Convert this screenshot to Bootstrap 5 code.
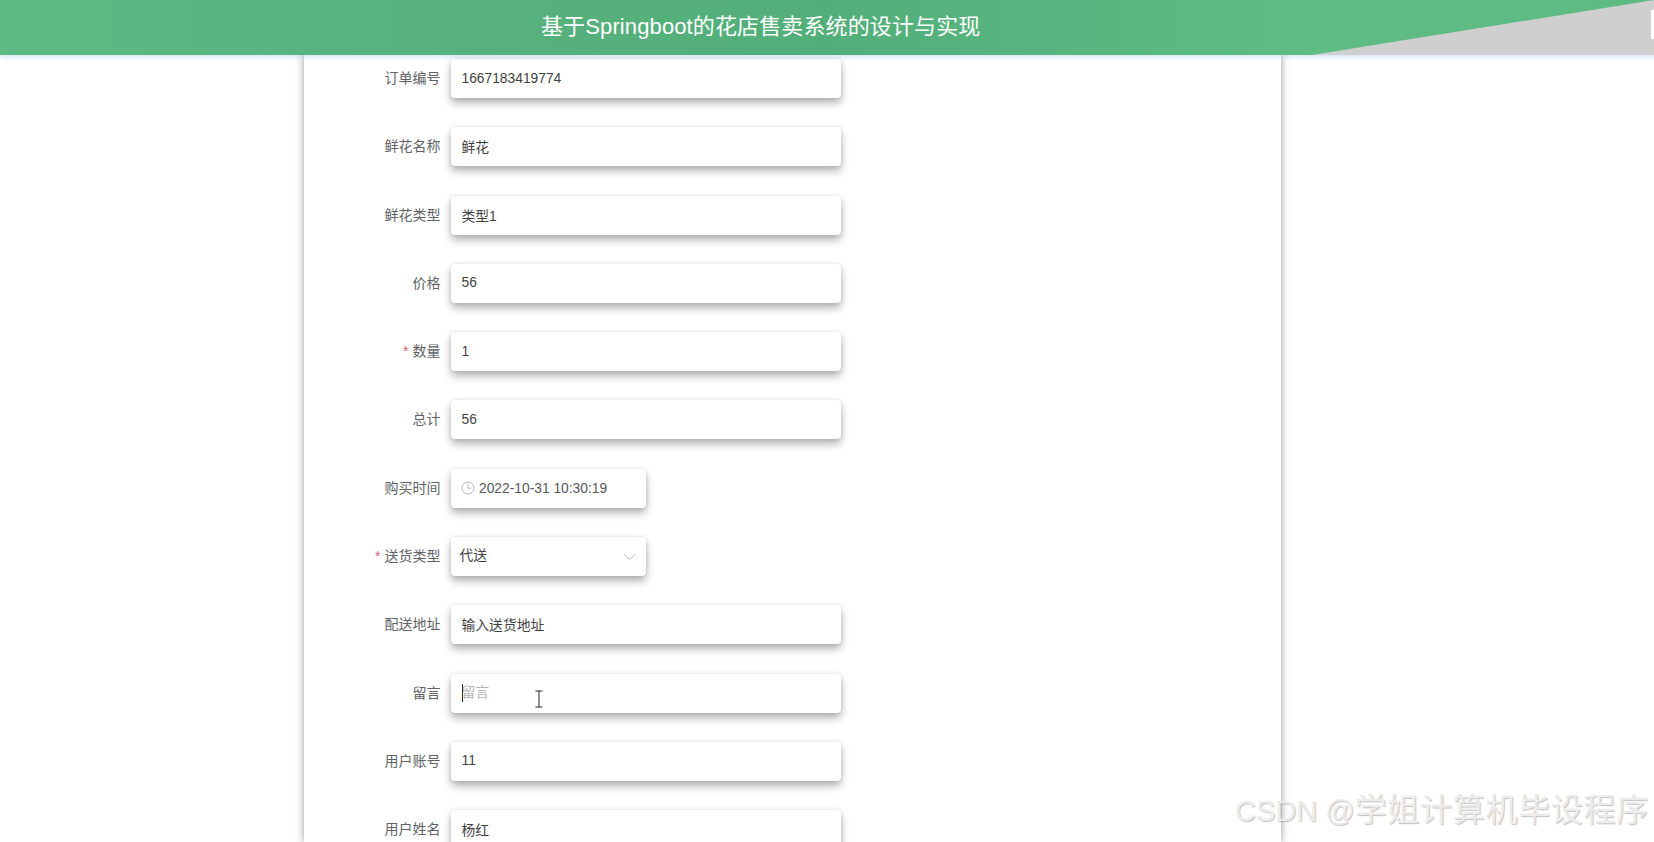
<!DOCTYPE html>
<html lang="zh">
<head>
<meta charset="utf-8">
<title>订单</title>
<link href="https://cdn.jsdelivr.net/npm/bootstrap@5.3.0/dist/css/bootstrap.min.css" rel="stylesheet">
<style>
html,body{height:842px;overflow:hidden;background:#fff;font-family:"Liberation Sans","Noto Sans CJK SC",sans-serif;}
.site-head{height:55px;position:relative;z-index:2;background:linear-gradient(90deg,#5dba83 0%,#55b07b 35%,#53af7a 50%,#5ebc84 80%,#5cba82 100%);box-shadow:0 2px 5px rgba(120,170,230,.35);}
.head-title{margin-left:541px;font-size:22px;letter-spacing:.12px;line-height:53px;color:#fff;white-space:nowrap;}
.head-corner{position:absolute;right:0;top:0;width:342px;height:55px;}
.sheet{width:977px;margin-left:304px;height:787px;padding-top:4px;background:#fff;box-shadow:0 0 8px rgba(0,0,0,.42);}
.frow{margin-bottom:29.3px;height:39px;}
.flabel{width:136.5px;margin:0 10.5px 0 0;text-align:right;font-size:14px;line-height:39px;color:#606266;flex:none;white-space:nowrap;}
.req{color:#e0606a;margin-right:4px;}
.fbox{width:390px;height:39px;background:#fff;border-radius:4px;box-shadow:0 5px 8px rgba(0,0,0,.3),0 0 4px rgba(0,0,0,.1);}
.fbox-s{width:195px;}
.finput.form-control{height:39px;padding:0 10.5px 1px;border:0;border-radius:4px;background:transparent;box-shadow:none;font-size:13.8px;color:#3f3f42;}
.finput.form-control::placeholder{color:#b0b2b8;}
.finput.inner{padding:0;width:130px;flex:1 1 auto;color:#55575b;}
.clock{margin:0 4px 0 10px;flex:none;}
.seltext{padding-left:8.5px;font-size:13.8px;color:#3f3f42;}
.chev{margin-right:10px;}
.caret-mark{position:absolute;left:462px;top:684px;width:1px;height:18px;background:#2b2b2b;z-index:1;}
.ibeam{position:absolute;left:534px;top:690px;z-index:1;}
.wm{position:absolute;left:1235px;top:789px;font-size:29px;line-height:42px;color:#ececec;text-shadow:1px 1px 1px rgba(0,0,0,.24);white-space:nowrap;z-index:3;}
.wm-cjk{font-size:32px;letter-spacing:.7px;}
</style>
</head>
<body class="position-relative">
<header class="site-head d-flex align-items-start">
  <div class="head-title">基于Springboot的花店售卖系统的设计与实现</div>
  <svg class="head-corner" viewBox="0 0 342 55" aria-hidden="true"><polygon points="0,55 342,0 342,55" fill="#cfcfcf"/><rect x="339" y="10" width="3" height="29" fill="#fff"/></svg>
</header>
<main class="sheet">
  <form>
    <div class="frow d-flex"><label class="flabel">订单编号</label><div class="fbox"><input class="form-control finput" value="1667183419774"></div></div>
    <div class="frow d-flex"><label class="flabel">鲜花名称</label><div class="fbox"><input class="form-control finput" value="鲜花"></div></div>
    <div class="frow d-flex"><label class="flabel">鲜花类型</label><div class="fbox"><input class="form-control finput" value="类型1"></div></div>
    <div class="frow d-flex"><label class="flabel">价格</label><div class="fbox"><input class="form-control finput" value="56"></div></div>
    <div class="frow d-flex"><label class="flabel"><span class="req">*</span>数量</label><div class="fbox"><input class="form-control finput" value="1"></div></div>
    <div class="frow d-flex"><label class="flabel">总计</label><div class="fbox"><input class="form-control finput" value="56"></div></div>
    <div class="frow d-flex"><label class="flabel">购买时间</label><div class="fbox fbox-s d-flex align-items-center">
      <svg class="clock" width="14" height="14" viewBox="0 0 14 14" fill="none" stroke="#b4b6bb" stroke-width="1"><circle cx="7" cy="7" r="6"/><path d="M7 3.4V7.2H10"/></svg>
      <input class="form-control finput inner" value="2022-10-31 10:30:19"></div></div>
    <div class="frow d-flex"><label class="flabel"><span class="req">*</span>送货类型</label><div class="fbox fbox-s d-flex align-items-center justify-content-between">
      <span class="seltext">代送</span>
      <svg class="chev" width="13" height="8" viewBox="0 0 13 8" fill="none" stroke="#b4b6bb" stroke-width="1"><path d="M1 1.2L6.5 6.6L12 1.2"/></svg></div></div>
    <div class="frow d-flex"><label class="flabel">配送地址</label><div class="fbox"><input class="form-control finput" value="输入送货地址"></div></div>
    <div class="frow d-flex"><label class="flabel">留言</label><div class="fbox"><input class="form-control finput" placeholder="留言"></div></div>
    <div class="frow d-flex"><label class="flabel">用户账号</label><div class="fbox"><input class="form-control finput" value="11"></div></div>
    <div class="frow d-flex"><label class="flabel">用户姓名</label><div class="fbox"><input class="form-control finput" value="杨红"></div></div>
  </form>
</main>
<div class="caret-mark"></div>
<svg class="ibeam" width="10" height="18" viewBox="0 0 10 18" fill="none" stroke="#222" stroke-width="1"><path d="M1.5 1H8.5M5 1V17M1.5 17H8.5"/></svg>
<div class="wm">CSDN @<span class="wm-cjk">学姐计算机毕设程序</span></div>
<script src="https://cdn.jsdelivr.net/npm/bootstrap@5.3.0/dist/js/bootstrap.bundle.min.js"></script>
</body>
</html>
